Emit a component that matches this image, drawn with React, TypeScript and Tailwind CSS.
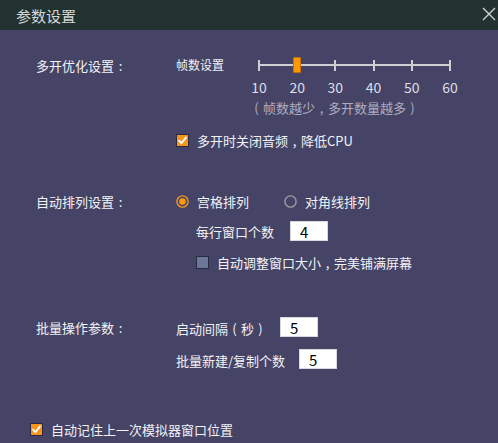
import React from 'react';

const font = "font-['Noto_Sans_CJK_SC','Microsoft_YaHei',sans-serif]";

// full-width punctuation drawn centred in its cell, like the original dialog font
function P({ c }: { c: string }) {
  return <span className="inline-block w-[1em] text-center">{c}</span>;
}

function CheckBox({ checked }: { checked: boolean }) {
  return (
    <svg width="13" height="13" viewBox="0 0 13 13" className="shrink-0">
      <rect x="0.5" y="0.5" width="12" height="12" fill={checked ? '#f7941d' : '#6b7699'} stroke="#2a2a40" />
      {checked && (
        <path d="M3 6.6 L5.4 9.2 L10 3.4" fill="none" stroke="#ffffff" strokeWidth="1.8" strokeLinecap="round" strokeLinejoin="round" />
      )}
    </svg>
  );
}

function Radio({ checked }: { checked: boolean }) {
  return (
    <svg width="13" height="13" viewBox="0 0 13 13" className="shrink-0">
      <circle cx="6.5" cy="6.5" r="5.6" fill="none" stroke={checked ? '#f39a1e' : '#9c9ca4'} strokeWidth="1.4" />
      {checked && <circle cx="6.5" cy="6.5" r="3.3" fill="#ff9a00" />}
    </svg>
  );
}

function NumBox({ value }: { value: string }) {
  return (
    <div className="flex h-[20px] w-[38px] items-center border border-[#d8d8e0] bg-white pl-[9px] text-[15px] leading-none text-black">
      {value}
    </div>
  );
}

const ticks = [10, 20, 30, 40, 50, 60];

function Slider() {
  return (
    <div className="flex flex-col">
      <div className="relative h-[20px] w-[193px]">
        <div className="absolute left-0 right-0 top-[9px] h-[2px] bg-[#cfcfd4]" />
        <div className="flex h-full items-center justify-between">
          {ticks.map((t) => (
            <div key={t} className="h-[11px] w-[2px] bg-[#cfcfd4]" />
          ))}
        </div>
        {/* thumb sits on the 20 tick */}
        <div className="absolute left-[35px] top-[2px] h-[16px] w-[8px] rounded-[1px] border border-[#c77200] bg-[#ff9900]" />
      </div>
      <div className="-mx-[9px] mt-[3px] flex justify-between">
        {ticks.map((t) => (
          <span key={t} className="w-[20px] text-center text-[14px] leading-[18px] text-[#dedee6]">
            {t}
          </span>
        ))}
      </div>
    </div>
  );
}

export default function App() {
  return (
    <div className={`flex h-[443px] w-[498px] flex-col overflow-hidden bg-[#454466] text-[13px] text-[#f2f2f6] ${font}`}>
      <div className="flex h-[30px] shrink-0 items-center justify-between bg-[#213231] pl-[16px] pr-[2px]">
        <span className="text-[15px] leading-none text-[#d4d6d6]">参数设置</span>
        <svg width="14" height="14" viewBox="0 0 14 14" className="mb-[2px]">
          <path d="M1 1 L13 13 M13 1 L1 13" stroke="#d0d0d4" strokeWidth="1.4" />
        </svg>
      </div>

      {/* 多开优化设置 */}
      <div className="mt-[25px] flex pl-[36px]">
        <div className="flex h-[20px] w-[140px] shrink-0 items-center leading-none">
          多开优化设置<P c=":" />
        </div>
        <div className="flex flex-col">
          <div className="flex items-start">
            <span className="flex h-[20px] w-[82px] items-center text-[12px] leading-none">帧数设置</span>
            <Slider />
          </div>
          <span className="ml-[74px] mt-[3px] leading-[18px] text-[#adadc0]">
            <P c="(" />帧数越少<P c="," />多开数量越多<P c=")" />
          </span>
          <div className="mt-[14px] flex h-[18px] items-center gap-[8px]">
            <CheckBox checked />
            <span className="leading-none">
              多开时关闭音频<P c="," />降低CPU
            </span>
          </div>
        </div>
      </div>

      {/* 自动排列设置 */}
      <div className="mt-[43px] flex pl-[36px]">
        <div className="flex h-[18px] w-[140px] shrink-0 items-center leading-none">
          自动排列设置<P c=":" />
        </div>
        <div className="flex flex-col">
          <div className="flex h-[18px] items-center">
            <Radio checked />
            <span className="ml-[8px] w-[87px] leading-none">宫格排列</span>
            <Radio checked={false} />
            <span className="ml-[8px] leading-none">对角线排列</span>
          </div>
          <div className="ml-[20px] mt-[11px] flex items-center">
            <span className="w-[94px] leading-none">每行窗口个数</span>
            <NumBox value="4" />
          </div>
          <div className="ml-[20px] mt-[12px] flex h-[18px] items-center gap-[8px]">
            <CheckBox checked={false} />
            <span className="leading-none">
              自动调整窗口大小<P c="," />完美铺满屏幕
            </span>
          </div>
        </div>
      </div>

      {/* 批量操作参数 */}
      <div className="mt-[46px] flex pl-[36px]">
        <div className="flex h-[20px] w-[140px] shrink-0 items-center leading-none">
          批量操作参数<P c=":" />
        </div>
        <div className="flex flex-col">
          <div className="flex items-center">
            <span className="w-[104px] pt-[3px] leading-none">
              启动间隔<P c="(" />秒<P c=")" />
            </span>
            <NumBox value="5" />
          </div>
          <div className="mt-[12px] flex items-center">
            <span className="w-[123px] pt-[2px] leading-none">批量新建/复制个数</span>
            <NumBox value="5" />
          </div>
        </div>
      </div>

      <div className="mt-[51px] flex h-[18px] items-center gap-[8px] pl-[30px]">
        <CheckBox checked />
        <span className="leading-none">自动记住上一次模拟器窗口位置</span>
      </div>
    </div>
  );
}
